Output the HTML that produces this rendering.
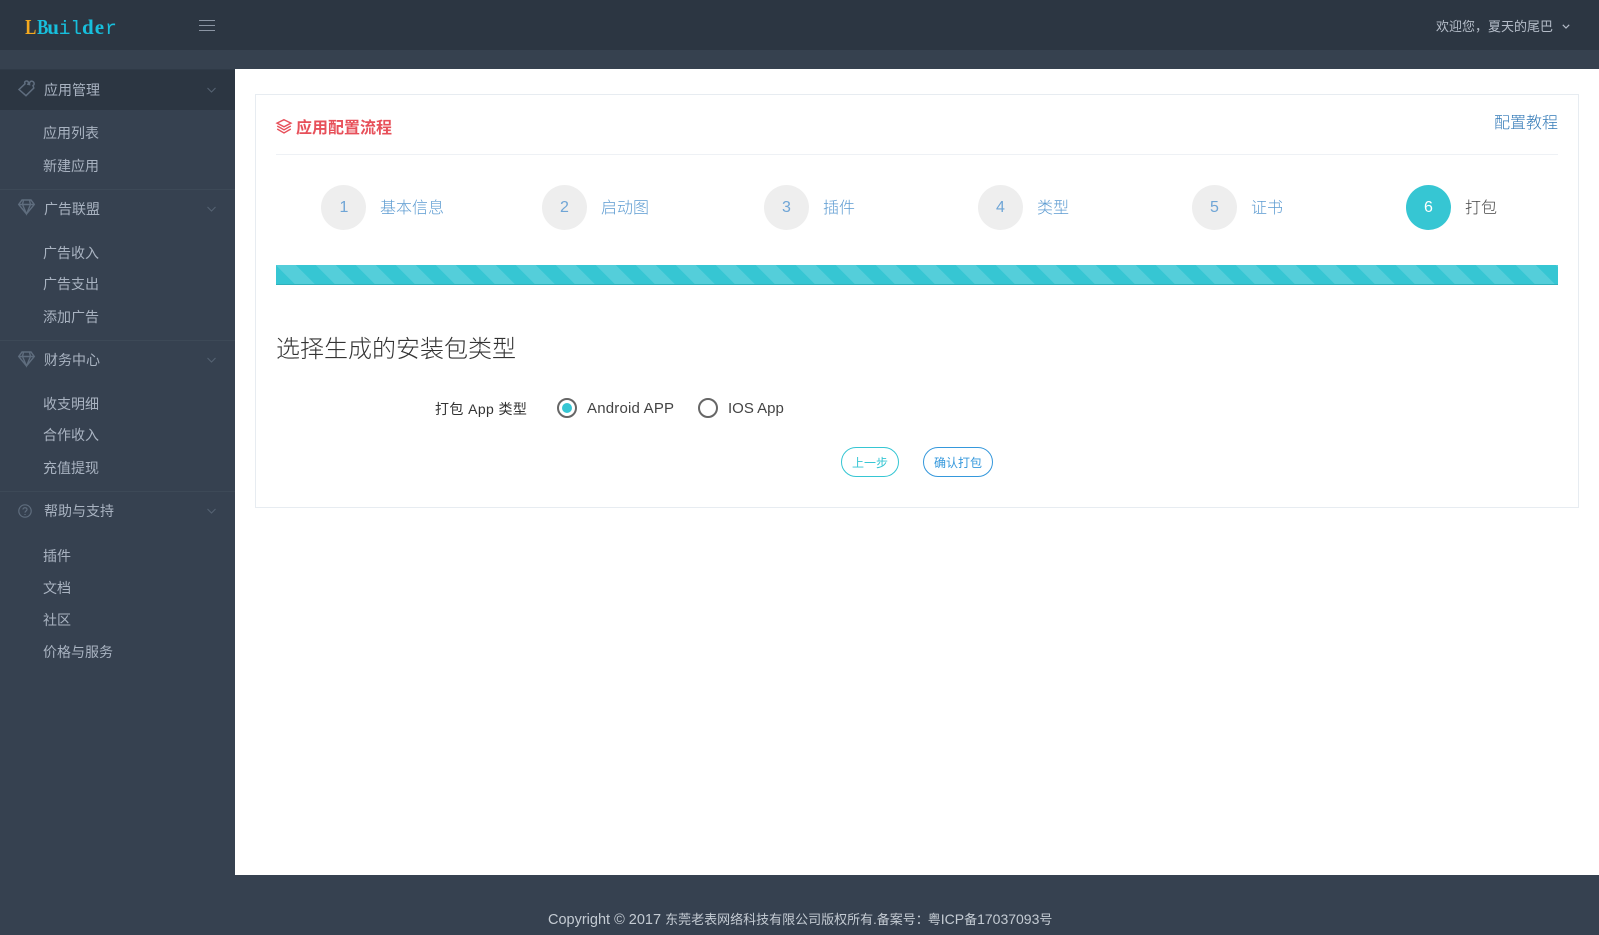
<!DOCTYPE html>
<html lang="zh-CN">
<head>
<meta charset="utf-8">
<title>LBuilder</title>
<style>
*{box-sizing:border-box}
html,body{margin:0;padding:0;width:1599px;height:935px;overflow:hidden;background:#364150;font-family:"Liberation Sans","Noto Sans CJK SC",sans-serif;font-size:14px}
.a{position:absolute;white-space:nowrap}
.t{line-height:20px;height:20px}
.m{color:#a9b3c1;font-size:14px}
.c{position:absolute;width:45px;height:45px;top:185px;border-radius:50%;background:#eee;color:#6fa5d6;font-size:16px;line-height:45px;text-align:center}
.s{position:absolute;top:199px;font-size:16px;line-height:20px;color:#5c9bd1;white-space:nowrap;font-weight:300}
.logo span{display:inline-block;width:11.6px;text-align:center;font-family:'Liberation Serif',serif;font-weight:bold;font-size:21px}
.logo span.n{transform:scaleX(.8)}
.logo span.o{font-family:'Liberation Mono',monospace;font-weight:normal;font-size:19.500px}
svg{position:absolute;overflow:visible}
</style>
</head>
<body>
<div class="a" style="left:0;top:0;width:1599px;height:50px;background:#2c3642"></div>
<div class="a" style="left:0;top:50px;width:1599px;height:19px;background:#36414f"></div>
<div class="a logo" style="left:24px;top:12px;line-height:30px;color:#17bfdc"><span class="n" style="color:#f4a91f">L</span><span class="n">B</span><span>u</span><span class="o">i</span><span class="o">l</span><span>d</span><span>e</span><span class="o">r</span></div>
<div class="a" style="left:199px;top:20px;width:16px;height:1px;background:#8b95a3"></div>
<div class="a" style="left:199px;top:25px;width:16px;height:1px;background:#8b95a3"></div>
<div class="a" style="left:199px;top:30px;width:16px;height:1px;background:#8b95a3"></div>
<div class="a t" style="left:1436px;top:17px;font-size:13px;color:#b4bcc8">欢迎您，夏天的尾巴</div>
<svg style="left:1562px;top:24px" width="8" height="5" viewBox="0 0 8 5"><path d="M.8 .8l3.200 3.200L7.200 .8" fill="none" stroke="#b4bcc8" stroke-width="1.200"/></svg>

<!-- Sidebar -->
<div class="a" style="left:0;top:69px;width:235px;height:1px;background:#2f3a47"></div>
<div class="a" style="left:0;top:70px;width:235px;height:40px;background:#2c3642"></div>
<div class="a" style="left:0;top:189px;width:235px;height:1px;background:#3d4957"></div>
<div class="a" style="left:0;top:340px;width:235px;height:1px;background:#3d4957"></div>
<div class="a" style="left:0;top:491px;width:235px;height:1px;background:#3d4957"></div>

<svg style="left:18px;top:80px" width="17" height="17" viewBox="0 0 17 17" fill="none" stroke="#5f6d7e" stroke-width="1.500"><path d="M1 9.500L7 3.800C6 2 7.500 .8 8.800 1 10.500 1.200 10.800 3 10 4.200L11.500 4.500C11 2 13 .5 14.800 1.500 16.600 2.500 16.500 5 15 5.500L15.800 8 8 15.700Z"/></svg>
<div class="a t m" style="left:44px;top:80px">应用管理</div>
<svg style="left:207px;top:87px" width="9" height="6" viewBox="0 0 9 6"><path d="M.5 1l4 4 4-4" fill="none" stroke="#566373" stroke-width="1"/></svg>
<div class="a t m" style="left:43px;top:123px">应用列表</div>
<div class="a t m" style="left:43px;top:156px">新建应用</div>

<svg style="left:18px;top:199px" width="17" height="16" viewBox="0 0 17 16" fill="none" stroke="#5f6d7e" stroke-width="1.400"><path d="M4 1h9l3.300 4.500L8.500 15 .7 5.500zM.7 5.500h15.600M5.500 1.200L4.500 5.500l4 9.500 4-9.500-1-4.300"/></svg>
<div class="a t m" style="left:44px;top:199px">广告联盟</div>
<svg style="left:207px;top:206px" width="9" height="6" viewBox="0 0 9 6"><path d="M.5 1l4 4 4-4" fill="none" stroke="#566373" stroke-width="1"/></svg>
<div class="a t m" style="left:43px;top:243px">广告收入</div>
<div class="a t m" style="left:43px;top:274px">广告支出</div>
<div class="a t m" style="left:43px;top:307px">添加广告</div>

<svg style="left:18px;top:351px" width="17" height="16" viewBox="0 0 17 16" fill="none" stroke="#5f6d7e" stroke-width="1.400"><path d="M4 1h9l3.300 4.500L8.500 15 .7 5.500zM.7 5.500h15.600M5.500 1.200L4.500 5.500l4 9.500 4-9.500-1-4.300"/></svg>
<div class="a t m" style="left:44px;top:350px">财务中心</div>
<svg style="left:207px;top:357px" width="9" height="6" viewBox="0 0 9 6"><path d="M.5 1l4 4 4-4" fill="none" stroke="#566373" stroke-width="1"/></svg>
<div class="a t m" style="left:43px;top:394px">收支明细</div>
<div class="a t m" style="left:43px;top:425px">合作收入</div>
<div class="a t m" style="left:43px;top:458px">充值提现</div>

<svg style="left:18px;top:504px" width="14" height="14" viewBox="0 0 14 14" fill="none" stroke="#5f6d7e" stroke-width="1.200"><circle cx="7" cy="7" r="6.200"/><path d="M5 5.500C5 3.200 9 3.200 9 5.500 9 7 7 7 7 8.600M7 10v1"/></svg>
<div class="a t m" style="left:44px;top:501px">帮助与支持</div>
<svg style="left:207px;top:508px" width="9" height="6" viewBox="0 0 9 6"><path d="M.5 1l4 4 4-4" fill="none" stroke="#566373" stroke-width="1"/></svg>
<div class="a t m" style="left:43px;top:546px">插件</div>
<div class="a t m" style="left:43px;top:578px">文档</div>
<div class="a t m" style="left:43px;top:610px">社区</div>
<div class="a t m" style="left:43px;top:642px">价格与服务</div>

<!-- Content -->
<div class="a" style="left:235px;top:69px;width:1364px;height:806px;background:#fff"></div>
<div class="a" style="left:255px;top:94px;width:1324px;height:414px;background:#fff;border:1px solid #e7ecf1"></div>
<div class="a" style="left:276px;top:154px;width:1282px;height:1px;background:#eef1f5"></div>

<svg style="left:276px;top:119px" width="16" height="15" viewBox="0 0 16 15" fill="none" stroke="#e7505a" stroke-width="1.400"><path d="M8 .7l7 3.400L8 7.800 1 4.100zM1.200 7L8 10.800 14.800 7M1.200 10L8 14l6.800-4"/></svg>
<div class="a t" style="left:296px;top:119px;font-size:16px;font-weight:bold;color:#e7505a">应用配置流程</div>
<div class="a t" style="left:1494px;top:114px;font-size:16px;color:#337ab7;font-weight:300">配置教程</div>

<div class="c" style="left:321px;padding-left:1px">1</div><div class="s" style="left:380px">基本信息</div>
<div class="c" style="left:542px">2</div><div class="s" style="left:601px">启动图</div>
<div class="c" style="left:764px">3</div><div class="s" style="left:823px">插件</div>
<div class="c" style="left:978px">4</div><div class="s" style="left:1037px">类型</div>
<div class="c" style="left:1192px">5</div><div class="s" style="left:1251px">证书</div>
<div class="c" style="left:1406px;background:#36c6d3;color:#fff">6</div><div class="s" style="left:1465px;color:#444">打包</div>

<div class="a" style="left:276px;top:265px;width:1282px;height:20px;background-color:#36c6d3;background-image:linear-gradient(45deg,rgba(255,255,255,.15) 25%,transparent 25%,transparent 50%,rgba(255,255,255,.15) 50%,rgba(255,255,255,.15) 75%,transparent 75%,transparent);background-size:40px 40px;border-bottom:1px solid #2fb0bb"></div>

<div class="a" style="left:276px;top:333px;font-size:24px;line-height:34px;color:#333;font-weight:300">选择生成的安装包类型</div>

<div class="a t" style="left:435px;top:399px;font-size:14px;color:#333;letter-spacing:.4px">打包 App 类型</div>
<div class="a" style="left:557px;top:398px;width:20px;height:20px;border:2px solid #666;border-radius:50%;background:#fff"></div>
<div class="a" style="left:562px;top:403px;width:10px;height:10px;border-radius:50%;background:#36c6d3"></div>
<div class="a t" style="left:587px;top:399px;font-size:15px;color:#444;letter-spacing:.2px">Android APP</div>
<div class="a" style="left:698px;top:398px;width:20px;height:20px;border:2px solid #666;border-radius:50%;background:#fff"></div>
<div class="a t" style="left:728px;top:399px;font-size:15px;color:#444">IOS App</div>

<div class="a" style="left:841px;top:447px;width:58px;height:30px;border:1px solid #36c6d3;border-radius:15px;color:#36c6d3;font-size:12px;line-height:30px;text-align:center;background:#fff">上一步</div>
<div class="a" style="left:923px;top:447px;width:70px;height:30px;border:1px solid #3598dc;border-radius:15px;color:#3598dc;font-size:12px;line-height:30px;text-align:center;background:#fff">确认打包</div>

<div class="a t" style="left:548px;top:909px;font-size:13px;color:#c4cbd3"><span style="font-size:14.500px">Copyright © 2017 </span>东莞老表网络科技有限公司版权所有.备案号：<span style="margin-left:-1px">粤</span><span style="font-size:14px">ICP</span>备<span style="font-size:14px">17037093</span>号</div>
</body>
</html>
